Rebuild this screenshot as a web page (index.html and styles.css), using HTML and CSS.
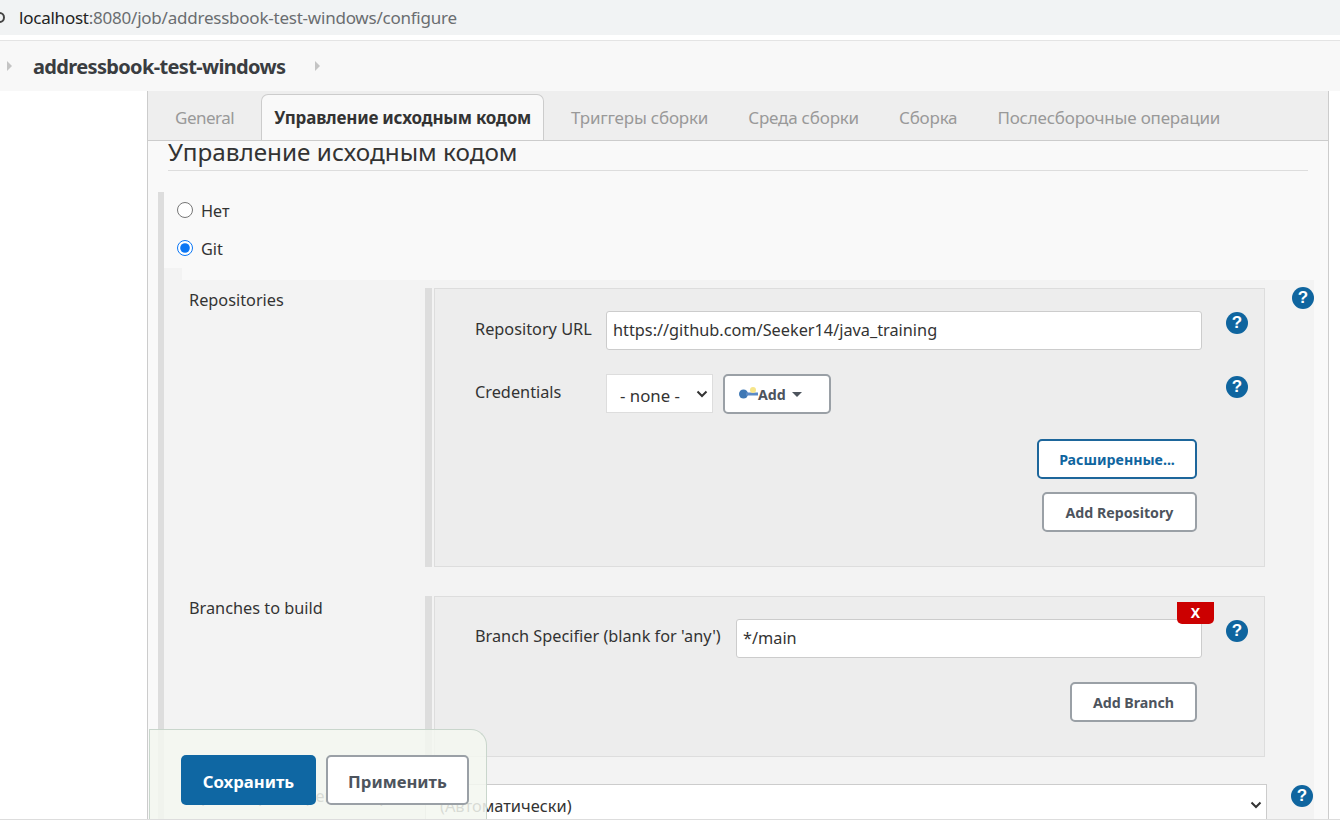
FILE: index.html
```html
<!DOCTYPE html>
<html lang="en">
<head>
  <meta charset="UTF-8">
  <title>addressbook-test-windows Config</title>
  <link rel="stylesheet" href="styles.css">
</head>
<body>
  <div class="page">
    <div class="addressbar">
      <span class="site-icon"></span>
      <span class="url"><span class="host">localhost</span>:8080/job/addressbook-test-windows/configure</span>
    </div>
    <div class="breadcrumbs">
      <span class="crumb-arrow"></span>
      <a class="crumb">addressbook-test-windows</a>
      <span class="crumb-arrow"></span>
    </div>

    <div class="main">
      <div class="tabs">
        <a class="tab tab-general">General</a>
        <a class="tab active">Управление исходным кодом</a>
        <a class="tab">Триггеры сборки</a>
        <a class="tab">Среда сборки</a>
        <a class="tab">Сборка</a>
        <a class="tab">Послесборочные операции</a>
      </div>

      <h2 class="section-title">Управление исходным кодом</h2>

      <div class="scm">
        <label class="radio-row"><input type="radio" name="scm"> Нет</label>
        <label class="radio-row"><input type="radio" name="scm" checked> Git</label>

        <div class="git">
          <div class="field">
            <div class="field-label">Repositories</div>
            <div class="repeat repeat-repos">
              <div class="inner-row">
                <label class="inner-label">Repository URL</label>
                <div class="text-input">https://github.com/Seeker14/java_training</div>
                <span class="help">?</span>
              </div>
              <div class="inner-row creds">
                <label class="inner-label">Credentials</label>
                <div class="mini-select">- none -<svg class="chev" width="12" height="8" viewBox="0 0 12 8"><path d="M1.5 1.5 6 6l4.5-4.5" fill="none" stroke="#333" stroke-width="2"/></svg></div>
                <button class="btn btn-add">
                  <svg class="key" width="20" height="14" viewBox="0 0 20 14"><circle cx="4.5" cy="7" r="4.5" fill="#3f78b5"/><rect x="7" y="5.5" width="12" height="3" fill="#5b8ac6"/><circle cx="14" cy="3" r="3" fill="#f6e58a"/></svg>Add<span class="caret"></span>
                </button>
                <span class="help help-push">?</span>
              </div>
              <div class="actions">
                <button class="btn btn-blue">Расширенные...</button>
                <button class="btn btn-repo">Add Repository</button>
              </div>
            </div>
            <span class="help help-outer">?</span>
          </div>

          <div class="field field-branches">
            <div class="field-label">Branches to build</div>
            <div class="repeat repeat-branches">
              <span class="close-x">X</span>
              <div class="inner-row">
                <label class="inner-label">Branch Specifier (blank for 'any')</label>
                <div class="text-input branch-input">*/main</div>
                <span class="help">?</span>
              </div>
              <div class="actions">
                <button class="btn btn-branch">Add Branch</button>
              </div>
            </div>
          </div>

          <div class="field field-browser">
            <div class="field-label">Просмотрщик репозитория</div>
            <div class="big-select">(Автоматически)<svg class="chev" width="12" height="8" viewBox="0 0 12 8"><path d="M1.5 1.5 6 6l4.5-4.5" fill="none" stroke="#333" stroke-width="2"/></svg></div>
            <span class="help help-outer">?</span>
          </div>
        </div>
      </div>
    </div>

    <div class="savebar">
      <button class="btn btn-save">Сохранить</button>
      <button class="btn btn-apply">Применить</button>
    </div>
  </div>
</body>
</html>
```

FILE: styles.css
```css
*{
  box-sizing: border-box;
}
html, body{
  margin: 0;
  background: #fff;
  overflow: hidden;
}
body{
  font-family: "Noto Sans", "Open Sans", sans-serif;
  font-size: 16.3px;
  color: #333;
}
.page{
  position: relative;
  height: 820px;
  overflow: hidden;
  border-bottom: 1px solid #ddd;
}

/* browser bar */
.addressbar{
  height: 35px;
  background: #f1f3f4;
  display: flex;
  align-items: center;
  padding-left: 19px;
  position: relative;
}
.site-icon{
  position: absolute;
  left: -6px;
  top: 12px;
  width: 11px;
  height: 11px;
  border: 2px solid #444;
  border-radius: 50%;
}
.url{
  font-size: 17px;
  letter-spacing: -0.23px;
  color: #6a6d70;
}
.host{
  color: #222;
}

/* breadcrumbs */
.breadcrumbs{
  margin-top: 5px;
  height: 51px;
  border-top: 1px solid #e4e4e4;
  background: #f8f8f8;
  display: flex;
  align-items: center;
  padding-left: 7px;
}
.crumb{
  font-size: 20px;
  font-weight: 700;
  color: #3a3d41;
  margin: 0 30px 0 21px;
  letter-spacing: -0.65px;
}
.crumb-arrow{
  width: 0;
  height: 0;
  border-left: 5px solid #c4c4c4;
  border-top: 5px solid transparent;
  border-bottom: 5px solid transparent;
}

/* main panel */
.main{
  margin-left: 147px;
  width: 1182px;
  height: 733px;
  background: #f9f9f9;
  border-left: 1px solid #ccc;
  border-right: 1px solid #ccc;
}
.tabs{
  height: 50px;
  background: #eee;
  border-bottom: 1px solid #ccc;
  display: flex;
  align-items: flex-end;
  gap: 14px;
  padding-left: 14px;
}
.tab{
  height: 46px;
  padding: 0 12px;
  display: flex;
  align-items: center;
  color: #999;
  font-size: 17px;
  letter-spacing: -0.2px;
  border: 1px solid transparent;
  white-space: nowrap;
}
.tab-general{
  letter-spacing: -0.5px;
}
.tab.active{
  color: #333;
  font-weight: 700;
  background: #f9f9f9;
  border-color: #ccc;
  border-bottom: 0;
  border-radius: 7px 7px 0 0;
}
.section-title{
  margin: 0 20px;
  height: 30px;
  font-size: 24.3px;
  line-height: 22px;
  font-weight: 400;
  color: #333;
  border-bottom: 1px solid #ddd;
}

/* scm block */
.scm{
  margin: 21px 14px 0 10px;
  border-left: 6px solid #ddd;
}
.radio-row{
  display: flex;
  align-items: center;
  height: 38px;
  padding-left: 13px;
  gap: 8px;
}
.radio-row input{
  margin: -2px 0 0;
  width: 16px;
  height: 16px;
  accent-color: #0b76f4;
}
.git{
  margin-top: 12px;
  background: #f3f3f3;
  padding: 8px 0 0 25px;
}
.git::before{
  content: "";
  position: absolute;
  left: 164px;
  top: 268px;
  width: 18px;
  height: 12px;
  background: #f3f3f3;
}
.field{
  display: flex;
  align-items: flex-start;
  position: relative;
}
.field-label{
  width: 236px;
  flex: none;
  padding-top: 1px;
}
.help{
  width: 22px;
  height: 22px;
  flex: none;
  border-radius: 50%;
  background: #0f659f;
  color: #fff;
  font-family: "Liberation Sans", sans-serif;
  font-weight: 700;
  font-size: 17px;
  line-height: 22px;
  text-align: center;
  margin-top: 1px;
}
.help-outer{
  margin: -1px 0 0 27px;
}
.repeat{
  position: relative;
  width: 840px;
  border-left: 7px solid #ddd;
  background: #ededed;
  box-shadow: inset 2px 0 0 #f3f3f3, inset 3px 0 0 #ddd, inset -1px 0 0 #ddd, inset 0 1px 0 #ddd, inset 0 -1px 0 #ddd;
  padding: 23px 0 0 43px;
}
.repeat-repos{
  height: 279px;
}
.repeat-branches{
  height: 161px;
}
.inner-row{
  display: flex;
  align-items: flex-start;
  height: 40px;
}
.creds{
  margin-top: 23px;
}
.inner-label{
  flex: none;
  width: 131px;
  padding-top: 7px;
  white-space: nowrap;
}
.repeat-branches .inner-label{
  padding-top: 6px;
}
.text-input{
  width: 596px;
  height: 39px;
  background: #fff;
  border: 1px solid #ccc;
  border-radius: 3px;
  padding: 7px 6px 0;
  margin-right: 24px;
  flex: none;
  font-size: 16.3px;
}
.branch-input{
  width: 466px;
  margin-left: 130px;
}
.mini-select{
  width: 107px;
  height: 39px;
  background: #fff;
  border: 1px solid #ddd;
  padding: 9px 0 0 13px;
  position: relative;
  flex: none;
  font-size: 16.8px;
}
.mini-select .chev{
  position: absolute;
  right: 4px;
  top: 15px;
}
.btn{
  font-family: inherit;
  font-weight: 700;
  font-size: 14.2px;
  background: #fff;
  color: #4d545d;
  border: 2px solid #9aa0a6;
  border-radius: 5px;
  padding: 0;
  height: 40px;
  display: block;
}
.btn-add{
  margin-left: 10px;
  width: 108px;
  display: flex;
  align-items: center;
  padding-left: 14px;
}
.key{
  margin-right: -1px;
  flex: none;
}
.caret{
  margin-left: 6px;
  border-top: 5px solid #4d545d;
  border-left: 5px solid transparent;
  border-right: 5px solid transparent;
}
.help-push{
  margin-left: 395px;
  margin-top: 2px;
}
.actions{
  display: flex;
  flex-direction: column;
  align-items: flex-end;
  margin-right: 68px;
  gap: 13px;
  margin-top: 25px;
}
.btn-blue{
  width: 160px;
  color: #0f659f;
  border-color: #1d669b;
}
.btn-repo{
  width: 155px;
}
.btn-branch{
  width: 127px;
}
.field-branches{
  margin-top: 29px;
}
.close-x{
  position: absolute;
  top: 6px;
  right: 51px;
  width: 37px;
  height: 22px;
  background: #c00;
  color: #fff;
  font-weight: 700;
  font-size: 14px;
  line-height: 21px;
  text-align: center;
  border-radius: 0 0 5px 5px;
}
.repeat-branches .actions{
  margin-top: 23px;
}
.field-browser{
  margin-top: 27px;
}
.big-select{
  width: 842px;
  height: 40px;
  background: #fff;
  border: 1px solid #ccc;
  padding: 9px 0 0 14px;
  position: relative;
  flex: none;
  font-size: 16.4px;
}
.big-select .chev{
  position: absolute;
  right: 4px;
  top: 16px;
}
.field-browser .help-outer{
  margin: 1px 0 0 24px;
}

/* sticky save bar */
.savebar{
  position: absolute;
  left: 149px;
  top: 729px;
  width: 338px;
  height: 92px;
  background: rgba(243, 247, 240, 0.86);
  border: 1px solid #c9d6cc;
  border-bottom: 0;
  border-radius: 0 16px 0 0;
  display: flex;
  align-items: flex-start;
  gap: 10px;
  padding: 25px 0 0 31px;
}
.btn-save{
  width: 135px;
  height: 50px;
  font-size: 16.7px;
  padding-top: 3px;
  background: #0f67a3;
  color: #fff;
  border: 0;
}
.btn-apply{
  width: 143px;
  height: 50px;
  font-size: 16.7px;
  padding-top: 3px;
}
```
